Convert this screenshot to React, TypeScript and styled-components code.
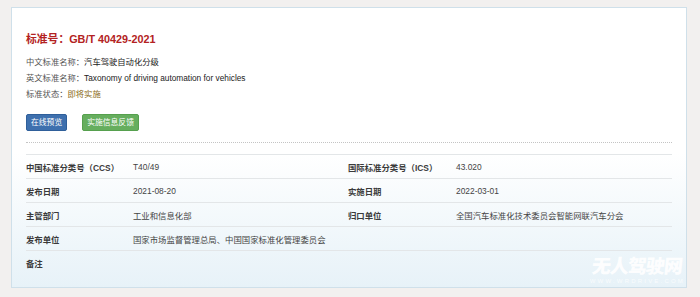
import React from "react";
import styled, { createGlobalStyle } from "styled-components";

const GlobalStyle = createGlobalStyle`
  html, body { margin: 0; padding: 0; background: #f2f0ef; }
  body {
    font-family: "Liberation Sans", "Noto Sans CJK SC", sans-serif;
    color: #333;
  }
  * { box-sizing: border-box; }
`;

const Page = styled.div`
  width: 700px;
  height: 297px;
  padding: 7px 13px 9px 11px;
`;

const Card = styled.div`
  position: relative;
  height: 281px;
  border: 1px solid #cfe0ea;
  background: linear-gradient(to bottom, #ffffff 0%, #ffffff 52%, #e7f2f8 100%);
  padding: 24px 14px 0 14px;
  overflow: hidden;
`;

const Title = styled.h1`
  margin: 0;
  font-size: 10.8px;
  line-height: 14px;
  font-weight: 700;
  color: #b32222;
`;

const InfoList = styled.div`
  margin-top: 8px;
  display: flex;
  flex-direction: column;
`;

const InfoLine = styled.div`
  font-size: 8.3px;
  line-height: 16px;
  color: #222;
  white-space: nowrap;
`;

const InfoLabel = styled.span`
  color: #555;
`;

const Status = styled.span`
  color: #8a6a16;
`;

const Actions = styled.div`
  display: flex;
  gap: 15px;
  margin-top: 12px;
`;

const Button = styled.button<{ $tone: "blue" | "green" }>`
  height: 17px;
  padding: 0 4px;
  border-radius: 2px;
  border: 1px solid ${(p) => (p.$tone === "blue" ? "#2f5f9a" : "#56a04e")};
  background: ${(p) => (p.$tone === "blue" ? "#3e70ae" : "#66ae5e")};
  color: #fff;
  font-family: "Liberation Sans", "Noto Sans CJK SC", sans-serif;
  font-size: 7.8px;
  line-height: 15px;
  display: inline-flex;
  align-items: center;
  justify-content: center;
  cursor: pointer;
`;

const Separator = styled.div`
  margin-top: 11px;
  border-top: 1px dotted #c4c4c4;
`;

const Table = styled.div`
  margin-top: 11px;
  display: flex;
  flex-direction: column;
`;

const Row = styled.div`
  display: grid;
  grid-template-columns: 107px 215px 108px 1fr;
  align-items: center;
  height: 24px;
  border-top: 1px solid #e3e6e8;
`;

const Label = styled.div`
  font-size: 8.4px;
  font-weight: 700;
  color: #3a3a3a;
  white-space: nowrap;
`;

const Value = styled.div`
  font-size: 8.4px;
  color: #444;
  white-space: nowrap;
`;

const Watermark = styled.div`
  position: absolute;
  right: 1px;
  bottom: 1px;
  display: flex;
  flex-direction: column;
  align-items: center;
  color: rgba(255, 255, 255, 0.92);
  pointer-events: none;
`;

const WatermarkTitle = styled.div`
  font-family: "Noto Sans CJK SC", sans-serif;
  font-size: 19px;
  font-weight: 900;
  line-height: 22px;
  letter-spacing: -1px;
  transform: skewX(-6deg);
`;

const WatermarkUrl = styled.div`
  font-size: 6px;
  line-height: 10px;
  letter-spacing: 2.2px;
  color: rgba(255, 255, 255, 0.75);
`;

const rows: [string, string, string, string][] = [
  ["中国标准分类号（CCS）", "T40/49", "国际标准分类号（ICS）", "43.020"],
  ["发布日期", "2021-08-20", "实施日期", "2022-03-01"],
  ["主管部门", "工业和信息化部", "归口单位", "全国汽车标准化技术委员会智能网联汽车分会"],
  ["发布单位", "国家市场监督管理总局、中国国家标准化管理委员会", "", ""],
  ["备注", "", "", ""],
];

export default function App() {
  return (
    <>
      <GlobalStyle />
      <Page>
        <Card>
          <Title>标准号：GB/T 40429-2021</Title>
          <InfoList>
            <InfoLine>
              <InfoLabel>中文标准名称：</InfoLabel>汽车驾驶自动化分级
            </InfoLine>
            <InfoLine>
              <InfoLabel>英文标准名称：</InfoLabel>Taxonomy of driving automation for vehicles
            </InfoLine>
            <InfoLine>
              <InfoLabel>标准状态：</InfoLabel>
              <Status>即将实施</Status>
            </InfoLine>
          </InfoList>
          <Actions>
            <Button $tone="blue">在线预览</Button>
            <Button $tone="green">实施信息反馈</Button>
          </Actions>
          <Separator />
          <Table>
            {rows.map((r, i) => (
              <Row key={i}>
                <Label>{r[0]}</Label>
                <Value>{r[1]}</Value>
                <Label>{r[2]}</Label>
                <Value>{r[3]}</Value>
              </Row>
            ))}
          </Table>
          <Watermark>
            <WatermarkTitle>无人驾驶网</WatermarkTitle>
            <WatermarkUrl>WWW.WRDRIVE.COM</WatermarkUrl>
          </Watermark>
        </Card>
      </Page>
    </>
  );
}
